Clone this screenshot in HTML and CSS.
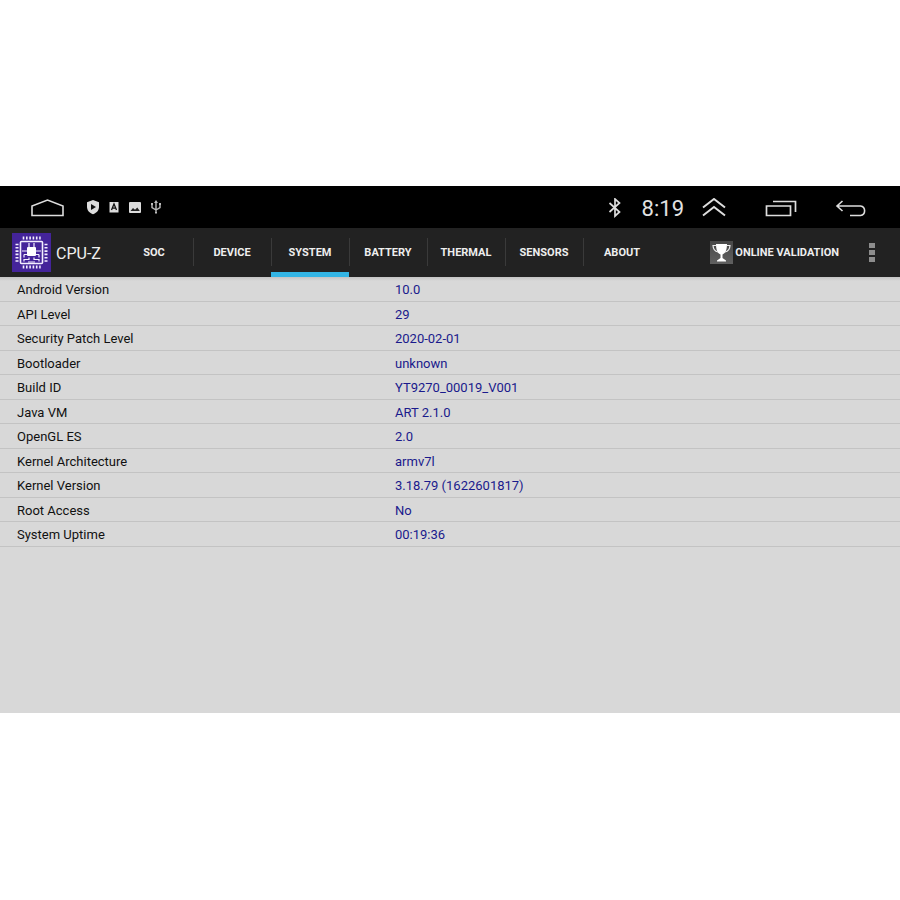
FILE: index.html
```html
<!DOCTYPE html>
<html lang="en">
<head>
  <meta charset="UTF-8" />
  <meta name="viewport" content="width=device-width, initial-scale=1.0"/>
  <title>CPU-Z</title>
  <link rel="stylesheet" href="styles.css">
</head>
<body>
  <div class="screen">
    <div class="status-bar">
      <button class="icon-btn" aria-label="Home">
        <svg width="34" height="20" viewBox="0 0 34 20" fill="none" stroke="#ddd" stroke-width="1.6"><path d="M2 17.500V8L17.500 2 33 8v9.500z"/></svg>
      </button>
      <div class="notices">
        <svg width="14" height="16" viewBox="0 0 14 16"><path d="M7 0l6 2.3v4.5C13 10.500 10.500 13 7 14.200 3.500 13 1 10.500 1 6.800V2.300z" fill="#ddd"/><path d="M5 4l5 3-5 3z" fill="#111"/></svg>
        <svg width="14" height="16" viewBox="0 0 14 16"><path d="M2.500 2h9v10.500h-9z" fill="#ddd"/><path d="M4.500 10L7 4l2.500 6M5.300 8.200h3.400" fill="none" stroke="#111" stroke-width="1.300"/></svg>
        <svg width="14" height="16" viewBox="0 0 14 16"><rect x="1" y="2" width="12" height="11" rx="1" fill="#ddd"/><path d="M2.500 11l2.500-3 2 1.800L9.300 7.500l2.500 3.500z" fill="#222"/></svg>
        <svg width="14" height="16" viewBox="0 0 14 16" fill="none" stroke="#bbb" stroke-width="1.400"><path d="M7 2v11M3 4v3.500L7 10l4-2.500V4"/><path d="M7 0l2 3H5zM2 3h2v2H2zM10 3h2v2h-2zM6 12h2v1.500H6z" fill="#bbb" stroke="none"/></svg>
      </div>
      <div class="status-right">
        <svg width="14" height="20" viewBox="0 0 14 20" fill="none" stroke="#ddd" stroke-width="1.700"><path d="M1.500 5l10 9L7 18V1l4.500 4-10 9"/></svg>
        <span class="clock">8:19</span>
        <button class="icon-btn" aria-label="Collapse">
          <svg width="26" height="20" viewBox="0 0 26 20" fill="none" stroke="#ddd" stroke-width="2"><path d="M2 9.500L13 1l11 8.500M2 17.500L13 9l11 8.500"/></svg>
        </button>
        <button class="icon-btn recents" aria-label="Recent apps">
          <svg width="32" height="18" viewBox="0 0 32 18" fill="none" stroke="#ddd" stroke-width="1.700"><path d="M1.500 7h24v9.500h-24zM8 2.500h22.500V13"/></svg>
        </button>
        <button class="icon-btn" aria-label="Back">
          <svg width="32" height="18" viewBox="0 0 32 18" fill="none" stroke="#ddd" stroke-width="1.600"><path d="M7.500 2L2 7l5.500 5M2 7h23.500a4.800 4.800 0 0 1 0 9.500H15"/></svg>
        </button>
      </div>
    </div>

    <header class="action-bar">
      <svg class="logo" width="39" height="39" viewBox="0 0 39 39">
        <rect width="39" height="39" fill="#44249a"/>
        <g fill="none" stroke="#f3efff">
          <rect x="8.500" y="8.500" width="22" height="22" rx="1" stroke-width="1.600"/>
          <path d="M10.700 5h18M10.700 34h18" stroke-width="3" stroke-dasharray="1.600 1.700"/>
          <path d="M5 10.700v18M34 10.700v18" stroke-width="3" stroke-dasharray="1.600 1.700"/>
          <path d="M17 10v4M22 10v4M10 18h5M29 18h-5M12 21.500h3M27 21.500h-3M12 21.500v3M27 21.500v3M12 28.500v-2h5v-2M27 28.500v-2h-5v-2M16 29h7" stroke-width="1.200"/>
        </g>
        <rect x="15" y="14" width="9" height="9" rx="1" fill="#fff"/>
      </svg>
      <h1 class="title">CPU-Z</h1>
      <nav class="tabs">
        <a class="tab" href="#soc">SOC</a>
        <a class="tab" href="#device">DEVICE</a>
        <a class="tab active" href="#system">SYSTEM</a>
        <a class="tab" href="#battery">BATTERY</a>
        <a class="tab" href="#thermal">THERMAL</a>
        <a class="tab" href="#sensors">SENSORS</a>
        <a class="tab" href="#about">ABOUT</a>
      </nav>
      <button class="validate">
        <svg width="23" height="23" viewBox="0 0 23 23">
          <defs><linearGradient id="tile" x2="0" y2="1"><stop stop-color="#484848"/><stop offset="1" stop-color="#606060"/></linearGradient></defs>
          <rect width="23" height="23" fill="url(#tile)"/>
          <path d="M6 3h11c0 5-1 9-4.500 10.500V17l3.500 2.500v1H7v-1l3.500-2.500v-3.500C7 12 6 8 6 3z" fill="#fff"/>
          <path d="M6.500 4.500H3c.2 3.500 2 6 5 6.500M16.500 4.500H20c-.2 3.500-2 6-5 6.500" fill="none" stroke="#eee" stroke-width="1.200"/>
        </svg>
        <span>ONLINE VALIDATION</span>
      </button>
      <button class="icon-btn more" aria-label="More options">
        <svg width="6" height="19" viewBox="0 0 6 19" fill="#8d8d8d"><path d="M0 0h6v5H0zM0 7h6v5H0zM0 14h6v5H0z"/></svg>
      </button>
    </header>

    <main class="content">
      <table class="info">
        <tr><th scope="row">Android Version</th><td>10.0</td></tr>
        <tr><th scope="row">API Level</th><td>29</td></tr>
        <tr><th scope="row">Security Patch Level</th><td>2020-02-01</td></tr>
        <tr><th scope="row">Bootloader</th><td>unknown</td></tr>
        <tr><th scope="row">Build ID</th><td>YT9270_00019_V001</td></tr>
        <tr><th scope="row">Java VM</th><td>ART 2.1.0</td></tr>
        <tr><th scope="row">OpenGL ES</th><td>2.0</td></tr>
        <tr><th scope="row">Kernel Architecture</th><td>armv7l</td></tr>
        <tr><th scope="row">Kernel Version</th><td>3.18.79 (1622601817)</td></tr>
        <tr><th scope="row">Root Access</th><td>No</td></tr>
        <tr><th scope="row">System Uptime</th><td>00:19:36</td></tr>
      </table>
    </main>
  </div>
</body>
</html>
```

FILE: styles.css
```css
* { box-sizing: border-box; }
body { margin: 0; padding: 186px 0; background: #fff; font-family: Roboto, "Liberation Sans", sans-serif; }
button { border: none; padding: 0; background: none; font-family: inherit; cursor: pointer; }
svg { display: block; flex: none; }

.status-bar { display: flex; align-items: center; height: 42px; padding: 2px 33px 0 30px; background: #000; }
.icon-btn { display: flex; }
.notices { display: flex; gap: 7px; margin-left: 22px; }
.status-right { display: flex; align-items: center; margin-left: auto; }
.clock { margin: 0 17px 0 20px; padding-top: 2px; color: #e2e2e2; font-size: 22px; line-height: 26px; }
.recents { margin: 0 38px; }

.action-bar { display: flex; align-items: center; height: 49px; padding: 0 25px 0 12px; background: #222; color: #eee; }
.title { width: 59px; margin: 0 0 0 5px; padding-top: 2px; font-size: 16px; font-weight: normal; line-height: 20px; }
.tabs { display: flex; align-self: stretch; }
.tab { display: flex; align-items: center; justify-content: center; width: 78px; border-bottom: 5px solid transparent; padding-top: 4px; color: #eee; font-size: 11px; font-weight: bold; text-decoration: none; background: linear-gradient(#3a3a3a, #3a3a3a) left 10px / 1px 28px no-repeat; }
.tab:first-child { background: none; }
.active { border-bottom-color: #33b5e5; }
.validate { display: flex; align-items: center; gap: 2px; margin-left: auto; color: #eee; font-size: 11px; font-weight: bold; }
.more { margin-left: 30px; }

.content { min-height: 436px; background: linear-gradient(#c4c4c4, #d8d8d8 4px); }
.info { width: 100%; border-spacing: 0; table-layout: fixed; font-size: 13px; line-height: 16px; }
.info tr { height: 25px; }
.info tr:nth-child(even) { height: 24px; }
.info th, .info td { padding: 2px 0 0 17px; border-bottom: 1px solid #c3c3c3; text-align: left; font-weight: normal; }
.info th { width: 42%; color: #111; }
.info td { color: #1a1a8c; }
```
